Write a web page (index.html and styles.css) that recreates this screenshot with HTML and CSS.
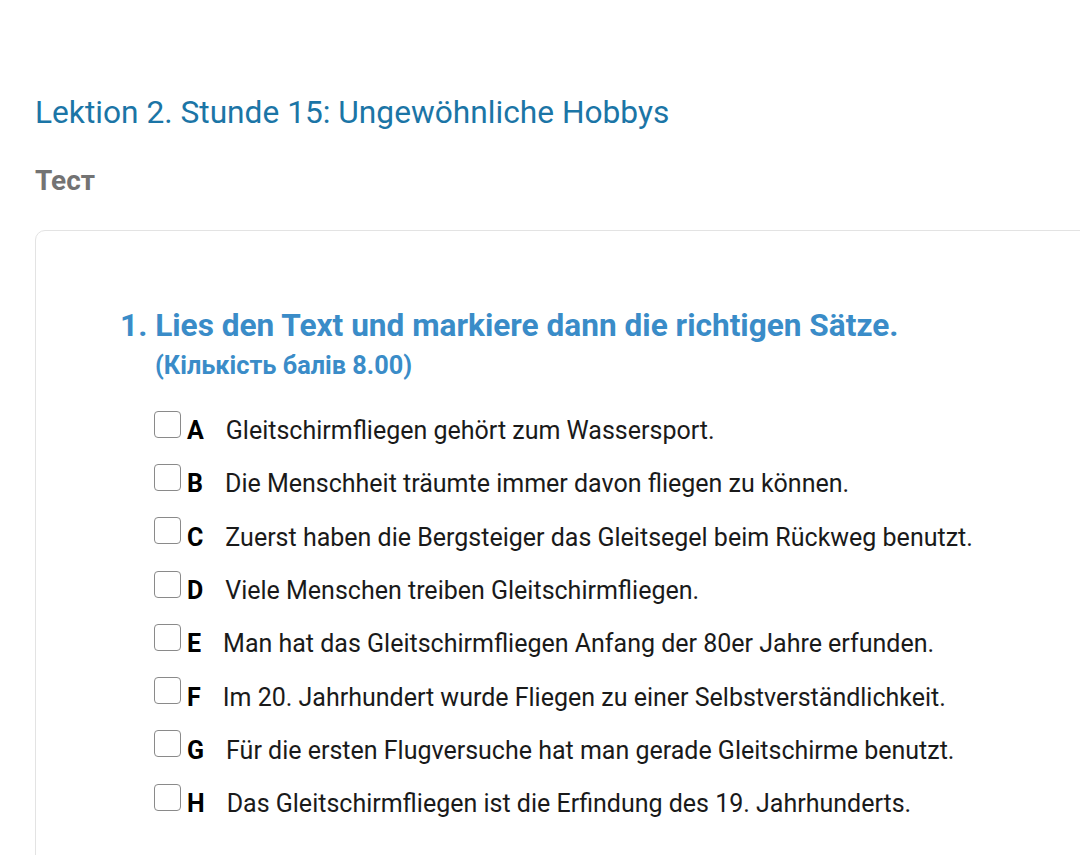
FILE: index.html
```html
<!DOCTYPE html>
<html lang="de">
<head>
<meta charset="utf-8">
<title>Lektion 2. Stunde 15</title>
<link rel="stylesheet" href="styles.css">
</head>
<body>
<div class="page">
  <h1 class="lesson-title">Lektion 2. Stunde 15: Ungewöhnliche Hobbys</h1>
  <h2 class="section-label">Тест</h2>
  <div class="card">
    <div class="question">
      <div class="q-title">1. Lies den Text und markiere dann die richtigen Sätze.</div>
      <div class="q-points">(Кількість балів 8.00)</div>
      <ul class="options">
        <li class="option"><span class="box"></span><span class="letter">A</span><span class="text">Gleitschirmfliegen gehört zum Wassersport.</span></li>
        <li class="option"><span class="box"></span><span class="letter">B</span><span class="text">Die Menschheit träumte immer davon fliegen zu können.</span></li>
        <li class="option"><span class="box"></span><span class="letter">C</span><span class="text">Zuerst haben die Bergsteiger das Gleitsegel beim Rückweg benutzt.</span></li>
        <li class="option"><span class="box"></span><span class="letter">D</span><span class="text">Viele Menschen treiben Gleitschirmfliegen.</span></li>
        <li class="option"><span class="box"></span><span class="letter">E</span><span class="text">Man hat das Gleitschirmfliegen Anfang der 80er Jahre erfunden.</span></li>
        <li class="option"><span class="box"></span><span class="letter">F</span><span class="text">Im 20. Jahrhundert wurde Fliegen zu einer Selbstverständlichkeit.</span></li>
        <li class="option"><span class="box"></span><span class="letter">G</span><span class="text">Für die ersten Flugversuche hat man gerade Gleitschirme benutzt.</span></li>
        <li class="option"><span class="box"></span><span class="letter">H</span><span class="text">Das Gleitschirmfliegen ist die Erfindung des 19. Jahrhunderts.</span></li>
      </ul>
    </div>
  </div>
</div>
</body>
</html>
```
FILE: styles.css
```css
html, body {
  margin: 0;
  padding: 0;
  background: #ffffff;
  overflow: hidden;
}
body {
  font-family: Roboto, "Liberation Sans", sans-serif;
  color: #111;
}
.page {
  padding: 93px 0 0 35px;
}
.lesson-title {
  margin: 0;
  font-size: 31.7px;
  font-weight: 400;
  line-height: 40px;
  color: #1b75a6;
}
.section-label {
  margin: 30px 0 0 0;
  font-size: 28px;
  font-weight: 700;
  line-height: 36px;
  color: #737373;
}
.card {
  margin-top: 31px;
  margin-right: -30px;
  border: 1px solid #e3e3e3;
  border-radius: 10px;
  height: 700px;
  padding: 75px 0 0 84px;
  box-sizing: border-box;
}
.q-title {
  font-size: 31.6px;
  font-weight: 700;
  line-height: 40px;
  color: #3a8cc8;
}
.q-points {
  margin-left: 35px;
  margin-top: 3px;
  font-size: 25.3px;
  font-weight: 700;
  line-height: 34px;
  color: #3a8cc8;
}
.options {
  list-style: none;
  margin: 21px 0 0 34px;
  padding: 0;
  display: flex;
  flex-direction: column;
}
.option {
  display: flex;
  align-items: center;
  height: 53.3px;
  font-size: 25px;
}
.box {
  width: 27px;
  height: 27px;
  border: 1.5px solid #8a8a8a;
  border-radius: 4px;
  box-sizing: border-box;
  margin-right: 6px;
  margin-top: -13px;
  flex: none;
}
.letter {
  font-weight: 700;
  color: #000;
  margin-right: 22px;
}
.text {
  color: #1a1a1a;
}
```
